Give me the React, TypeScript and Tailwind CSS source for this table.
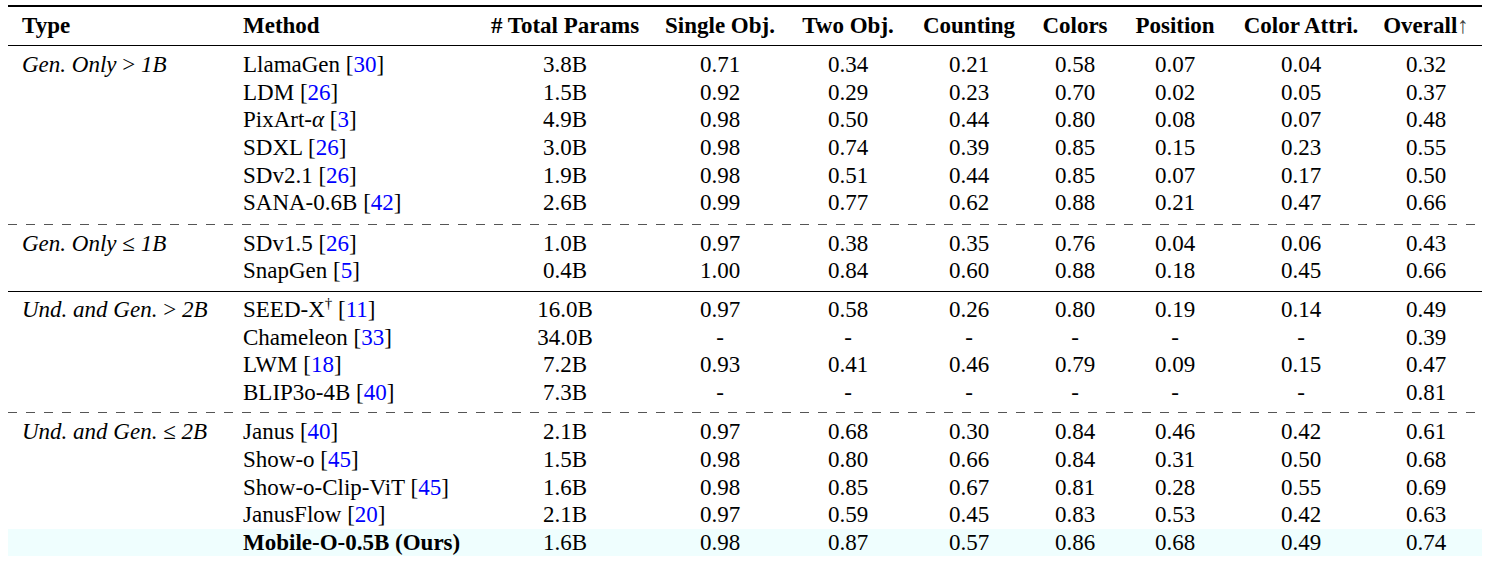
import type { ReactNode } from "react";

type Row = {
  type?: ReactNode;
  method: ReactNode;
  params: string;
  vals: string[];
  ours?: boolean;
};

const Cite = ({ n }: { n: number }) => (
  <>
    {" "}[<span className="text-[#0000ff]">{n}</span>]
  </>
);

const Ty = ({ a, op, b }: { a: string; op: string; b: string }) => (
  <span>
    <i>{a}</i> <span className="not-italic">{op}</span> <i>{b}</i>
  </span>
);

const groups: Row[][] = [
  [
    { type: <Ty a="Gen. Only" op=">" b="1B" />, method: <>LlamaGen<Cite n={30} /></>, params: "3.8B", vals: ["0.71", "0.34", "0.21", "0.58", "0.07", "0.04", "0.32"] },
    { method: <>LDM<Cite n={26} /></>, params: "1.5B", vals: ["0.92", "0.29", "0.23", "0.70", "0.02", "0.05", "0.37"] },
    { method: <>PixArt-<i>α</i><Cite n={3} /></>, params: "4.9B", vals: ["0.98", "0.50", "0.44", "0.80", "0.08", "0.07", "0.48"] },
    { method: <>SDXL<Cite n={26} /></>, params: "3.0B", vals: ["0.98", "0.74", "0.39", "0.85", "0.15", "0.23", "0.55"] },
    { method: <>SDv2.1<Cite n={26} /></>, params: "1.9B", vals: ["0.98", "0.51", "0.44", "0.85", "0.07", "0.17", "0.50"] },
    { method: <>SANA-0.6B<Cite n={42} /></>, params: "2.6B", vals: ["0.99", "0.77", "0.62", "0.88", "0.21", "0.47", "0.66"] },
  ],
  [
    { type: <Ty a="Gen. Only" op="≤" b="1B" />, method: <>SDv1.5<Cite n={26} /></>, params: "1.0B", vals: ["0.97", "0.38", "0.35", "0.76", "0.04", "0.06", "0.43"] },
    { method: <>SnapGen<Cite n={5} /></>, params: "0.4B", vals: ["1.00", "0.84", "0.60", "0.88", "0.18", "0.45", "0.66"] },
  ],
  [
    { type: <Ty a="Und. and Gen." op=">" b="2B" />, method: <>SEED-X<span className="text-[15px] align-top relative -top-[2px]">†</span><Cite n={11} /></>, params: "16.0B", vals: ["0.97", "0.58", "0.26", "0.80", "0.19", "0.14", "0.49"] },
    { method: <>Chameleon<Cite n={33} /></>, params: "34.0B", vals: ["-", "-", "-", "-", "-", "-", "0.39"] },
    { method: <>LWM<Cite n={18} /></>, params: "7.2B", vals: ["0.93", "0.41", "0.46", "0.79", "0.09", "0.15", "0.47"] },
    { method: <>BLIP3o-4B<Cite n={40} /></>, params: "7.3B", vals: ["-", "-", "-", "-", "-", "-", "0.81"] },
  ],
  [
    { type: <Ty a="Und. and Gen." op="≤" b="2B" />, method: <>Janus<Cite n={40} /></>, params: "2.1B", vals: ["0.97", "0.68", "0.30", "0.84", "0.46", "0.42", "0.61"] },
    { method: <>Show-o<Cite n={45} /></>, params: "1.5B", vals: ["0.98", "0.80", "0.66", "0.84", "0.31", "0.50", "0.68"] },
    { method: <>Show-o-Clip-ViT<Cite n={45} /></>, params: "1.6B", vals: ["0.98", "0.85", "0.67", "0.81", "0.28", "0.55", "0.69"] },
    { method: <>JanusFlow<Cite n={20} /></>, params: "2.1B", vals: ["0.97", "0.59", "0.45", "0.83", "0.53", "0.42", "0.63"] },
    { method: <b>Mobile-O-0.5B (Ours)</b>, params: "1.6B", vals: ["0.98", "0.87", "0.57", "0.86", "0.68", "0.49", "0.74"], ours: true },
  ],
];

const cols = "grid grid-cols-[221px_251px_170px_140px_116px_126px_86px_114px_138px_112px] items-center";

const heads = ["# Total Params", "Single Obj.", "Two Obj.", "Counting", "Colors", "Position", "Color Attri."];

function TableRow({ r }: { r: Row }) {
  return (
    <div className={[cols, "h-[27.6px]", r.ours ? "bg-[#effefe]" : ""].join(" ")}>
      <div className="pl-[14px] whitespace-nowrap">{r.type}</div>
      <div className="pl-[14px] whitespace-nowrap">{r.method}</div>
      <div className="text-center">{r.params}</div>
      {r.vals.map((v, i) => (
        <div key={i} className="text-center">{v}</div>
      ))}
    </div>
  );
}

const Dashed = () => (
  <div className="h-px bg-[linear-gradient(to_right,#555_50%,transparent_50%)] bg-[length:18px_1px]" />
);

export default function App() {
  const pads = ["pt-[5px] pb-[7px]", "pt-[5px] pb-[6px]", "pt-[4px] pb-[6px]", "pt-[5px] pb-[4px]"];
  return (
    <div className="w-[1485px] h-[561px] bg-white overflow-hidden pt-[5px] pl-[8px] font-[family-name:'Liberation_Serif','Times_New_Roman',serif] text-[23px] leading-none text-black">
      <div className="w-[1474px]">
        <div className="h-[2px] bg-black" />
        <div className={[cols, "h-[38px] pb-[2px] font-bold"].join(" ")}>
          <div className="pl-[14px]">Type</div>
          <div className="pl-[14px]">Method</div>
          {heads.map((h) => (
            <div key={h} className="text-center whitespace-nowrap">{h}</div>
          ))}
          <div className="text-center whitespace-nowrap">
            Overall<span className="font-normal text-[#444]">↑</span>
          </div>
        </div>
        <div className="h-px bg-black" />
        {groups.map((g, gi) => (
          <div key={gi}>
            <div className={pads[gi]}>
              {g.map((r, ri) => (
                <TableRow key={ri} r={r} />
              ))}
            </div>
            {gi === 0 || gi === 2 ? <Dashed /> : gi === 1 ? <div className="h-px bg-black" /> : null}
          </div>
        ))}
      </div>
    </div>
  );
}
